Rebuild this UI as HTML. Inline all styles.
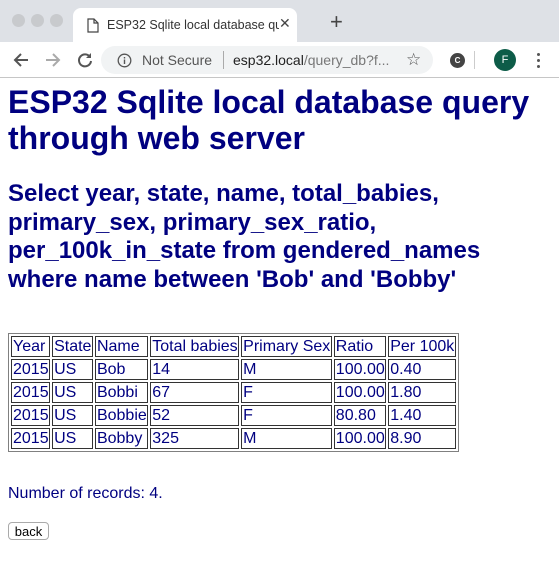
<!DOCTYPE html>
<html><head><meta charset="utf-8"><style>
*{box-sizing:border-box}
html,body{margin:0;padding:0;width:559px;height:562px;overflow:hidden;background:#fff;font-family:"Liberation Sans",Arial,sans-serif}
.tabbar{position:absolute;left:0;top:0;width:559px;height:42px;background:#dee1e6}
.dot{position:absolute;top:14px;width:13px;height:13px;border-radius:50%;background:#c8cacd}
.tab{position:absolute;left:73px;top:8px;width:224px;height:34px;background:#fff;border-radius:8px 8px 0 0}
.tab .t{position:absolute;left:34px;top:10px;font-size:12.5px;color:#333;white-space:nowrap;width:172px;overflow:hidden}
.toolbar{position:absolute;left:0;top:42px;width:559px;height:36px;background:#fff;border-bottom:1px solid #c6c6c6}
.omni{position:absolute;left:101px;top:4px;width:332px;height:28px;border-radius:14px;background:#f1f3f4}
.content{position:absolute;left:0;top:79px;width:559px;color:#000080}
h1{position:absolute;left:8px;top:5px;margin:0;font-size:32px;line-height:36px;font-weight:bold}
h2{position:absolute;left:8px;top:101px;width:490px;margin:0;font-size:24px;line-height:28.7px;font-weight:bold}
table{position:absolute;left:8px;top:254px;border:1px solid #808080;border-spacing:2px;font-size:16px;color:#000080}
td{border:1px solid #333;padding:1px 0.5px 1px 1px;line-height:17px;height:21px}
.num{position:absolute;left:8px;top:406px;font-size:16px}
button{position:absolute;left:8px;top:443px;width:41px;height:18px;border:1px solid #aaa;border-radius:4px;background:#fff;font:13px "Liberation Sans",Arial,sans-serif;padding:0;color:#000}
</style></head><body>
<div class="tabbar">
<div class="dot" style="left:12px"></div><div class="dot" style="left:31px"></div><div class="dot" style="left:50px"></div>
<div class="tab">
<svg style="position:absolute;left:14px;top:10px" width="12" height="15" viewBox="0 0 12 15"><path d="M1 1h6l4 4v9H1z M7 1v4h4" fill="none" stroke="#444" stroke-width="1.2"/></svg>
<div class="t">ESP32 Sqlite local database qu</div>
<span style="position:absolute;left:206px;top:7px;font-size:14px;color:#444">✕</span>
</div>
<span style="position:absolute;left:330px;top:9px;font-size:22px;color:#444">+</span>
</div>
<div class="toolbar">
<svg style="position:absolute;left:12px;top:9px" width="18" height="18" viewBox="0 0 18 18"><path d="M16 9H3M9 3L3 9l6 6" fill="none" stroke="#555" stroke-width="2"/></svg>
<svg style="position:absolute;left:44px;top:9px" width="18" height="18" viewBox="0 0 18 18"><path d="M2 9h13M9 3l6 6-6 6" fill="none" stroke="#aaa" stroke-width="2"/></svg>
<svg style="position:absolute;left:76px;top:9px" width="18" height="18" viewBox="0 0 18 18"><path d="M14 6A6 6 0 1 0 15 10" fill="none" stroke="#555" stroke-width="2"/><path d="M15 2v5h-5z" fill="#555"/></svg>
<div class="omni">
<svg style="position:absolute;left:16px;top:7px" width="15" height="15" viewBox="0 0 15 15"><circle cx="7.5" cy="7.5" r="6.3" fill="none" stroke="#555" stroke-width="1.3"/><path d="M7.5 6.5v4.5M7.5 4v1.5" stroke="#555" stroke-width="1.4"/></svg>
<span style="position:absolute;left:41px;top:6px;font-size:14px;color:#555">Not Secure</span>
<span style="position:absolute;left:122px;top:5px;width:1px;height:18px;background:#aaa"></span>
<span style="position:absolute;left:132px;top:6px;font-size:14px;color:#222;white-space:nowrap">esp32.local<span style="color:#777">/query_db?f...</span></span>
<span style="position:absolute;left:305px;top:4px;font-size:17px;color:#555">☆</span>
</div>
<div style="position:absolute;left:450px;top:11px;width:15px;height:15px;border-radius:50%;background:#444;color:#fff;font-size:8px;font-weight:bold;text-align:center;line-height:15px">C</div>
<span style="position:absolute;left:474px;top:9px;width:1px;height:18px;background:#ccc"></span>
<div style="position:absolute;left:494px;top:7px;width:22px;height:22px;border-radius:50%;background:#0d5c48;color:#fff;font-size:11px;text-align:center;line-height:22px">F</div>
<div style="position:absolute;left:537px;top:11px;width:3px;height:3px;border-radius:50%;background:#555;box-shadow:0 6px 0 #555,0 12px 0 #555"></div>
</div>
<div class="content">
<h1>ESP32 Sqlite local database query through web server</h1>
<h2>Select year, state, name, total_babies, primary_sex, primary_sex_ratio, per_100k_in_state from gendered_names where name between 'Bob' and 'Bobby'</h2>
<table>
<tr><td>Year</td><td>State</td><td>Name</td><td>Total babies</td><td>Primary Sex</td><td>Ratio</td><td>Per 100k</td></tr>
<tr><td>2015</td><td>US</td><td>Bob</td><td>14</td><td>M</td><td>100.00</td><td>0.40</td></tr>
<tr><td>2015</td><td>US</td><td>Bobbi</td><td>67</td><td>F</td><td>100.00</td><td>1.80</td></tr>
<tr><td>2015</td><td>US</td><td>Bobbie</td><td>52</td><td>F</td><td>80.80</td><td>1.40</td></tr>
<tr><td>2015</td><td>US</td><td>Bobby</td><td>325</td><td>M</td><td>100.00</td><td>8.90</td></tr>
</table>
<div class="num">Number of records: 4.</div>
<button>back</button>
</div>
</body></html>
